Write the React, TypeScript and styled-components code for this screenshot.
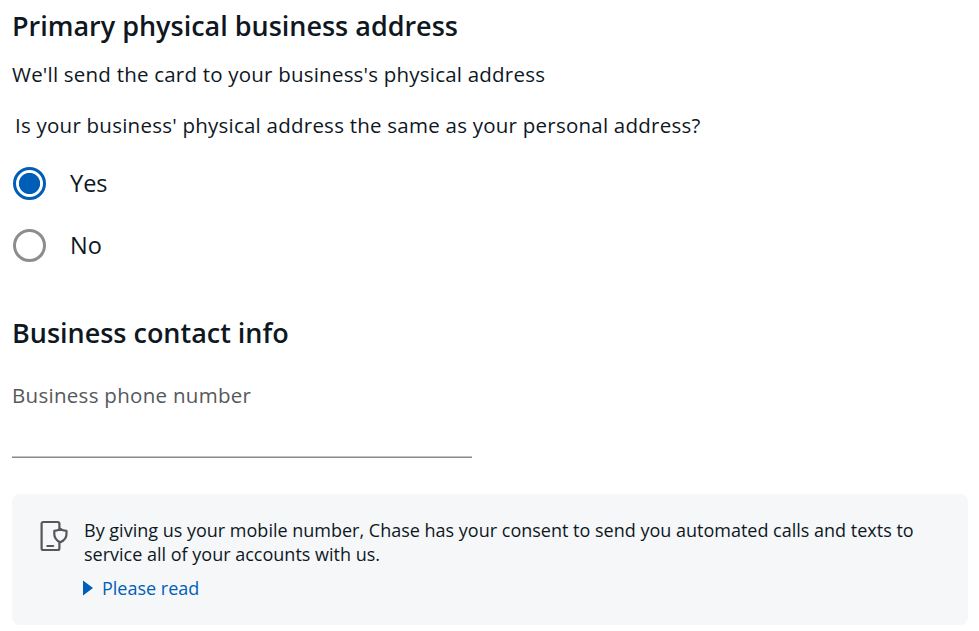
import React, { useState } from "react";
import styled, { createGlobalStyle } from "styled-components";

const GlobalStyle = createGlobalStyle`
  * { box-sizing: border-box; }
  body { margin: 0; background: #fff; font-family: "Open Sans", sans-serif; color: #0f171f; }
`;
const Page = styled.main`
  display: flex;
  flex-direction: column;
  align-items: flex-start;
  width: 979px;
  height: 631px;
  padding: 8px 11px 6px 12px;
  overflow: hidden;
`;
const Heading = styled.h2<{ $spaced?: boolean }>`
  margin: ${({ $spaced }) => ($spaced ? "25px" : "0")} 0 0;
  font-size: 26.97px;
  line-height: 36px;
  font-weight: 600;
  white-space: nowrap;
`;
const Intro = styled.p`
  margin: 15px 0 0;
  font-size: 20.5px;
  letter-spacing: 0.21px;
  line-height: 30px;
  white-space: nowrap;
`;
const Question = styled.fieldset`
  border: 0;
  margin: 21px 0 0;
  padding: 0;
`;
const Legend = styled.legend`
  padding: 0 0 0 3px;
  font-size: 20.5px;
  letter-spacing: 0.235px;
  line-height: 30px;
  white-space: nowrap;
`;
const Option = styled.label`
  display: flex;
  align-items: center;
  gap: 24px;
  height: 34px;
  margin: 26px 0 28px;
  font-size: 23.5px;
`;
const Radio = styled.input`
  appearance: none;
  width: 33px;
  height: 33px;
  margin: 1px 0 0 1px;
  border: 3px solid #8d8d8d;
  border-radius: 50%;
  &:checked {
    border-color: #005eb8;
    background: radial-gradient(circle, #005eb8 10.2px, #fff 11px);
  }
`;
const Label = styled.label`
  margin-top: 29px;
  font-size: 20.5px;
  letter-spacing: 0.29px;
  line-height: 30px;
  color: #55585c;
`;
const Input = styled.input`
  width: 460px;
  height: 48px;
  padding: 0;
  border: 0;
  border-bottom: 1px solid #8a8a8a;
  box-shadow: inset 0 -1px #c2c2c2;
  background: transparent;
  font: inherit;
  font-size: 20.5px;
  outline: 0;
`;
const Notice = styled.aside`
  display: flex;
  gap: 16px;
  width: 956px;
  height: 131px;
  margin-top: 36px;
  padding: 24px 28px;
  border-radius: 8px;
  background: #f5f7f9;
`;
const DeviceIcon = styled.svg`
  flex: none;
  width: 28px;
  height: 32px;
  margin-top: 2px;
  fill: none;
  stroke: #55585b;
  stroke-width: 2.2;
  stroke-linecap: round;
  stroke-linejoin: round;
`;
const NoticeText = styled.p`
  margin: 0;
  font-size: 18px;
  line-height: 24px;
  white-space: nowrap;
`;
const ReadLink = styled.button`
  display: flex;
  align-items: center;
  gap: 9px;
  margin: 10px 0 0 -1px;
  padding: 0;
  border: 0;
  background: none;
  color: #005eb8;
  font: 18px/24px "Open Sans", sans-serif;
`;

export default function App() {
  const [same, setSame] = useState(true);
  return (
    <Page>
      <GlobalStyle />
      <Heading>Primary physical business address</Heading>
      <Intro>We'll send the card to your business's physical address</Intro>
      <Question>
        <Legend>Is your business' physical address the same as your personal address?</Legend>
        <Option><Radio type="radio" name="same" checked={same} onChange={() => setSame(true)} />Yes</Option>
        <Option><Radio type="radio" name="same" checked={!same} onChange={() => setSame(false)} />No</Option>
      </Question>
      <Heading $spaced>Business contact info</Heading>
      <Label htmlFor="phone">Business phone number</Label>
      <Input id="phone" type="tel" />
      <Notice>
        <DeviceIcon viewBox="0 0 28 32" aria-hidden="true">
          <path d="M19.4 8.6V3.8Q19.4 2 17.6 2H3.3Q1.6 2 1.6 3.8V28.2Q1.6 30 3.3 30H17.6Q19.4 30 19.4 28.2V22.5" />
          <path d="M20.3 8.8C18.6 10.1 16.6 10.7 14.3 10.9V14C14.3 17.9 16.8 20.7 20.3 22.2C23.9 20.7 26.5 17.9 26.5 14V10.9C24 10.7 22 10.1 20.3 8.8Z" />
          <path d="M7.3 26H13.2" />
        </DeviceIcon>
        <div>
          <NoticeText>By giving us your mobile number, Chase has your consent to send you automated calls and texts to<br />service all of your accounts with us.</NoticeText>
          <ReadLink type="button"><svg width="10" height="16" viewBox="0 0 10 16"><path d="M0 0.5L10 8L0 15.5Z" fill="#005eb8" /></svg>Please read</ReadLink>
        </div>
      </Notice>
    </Page>
  );
}
